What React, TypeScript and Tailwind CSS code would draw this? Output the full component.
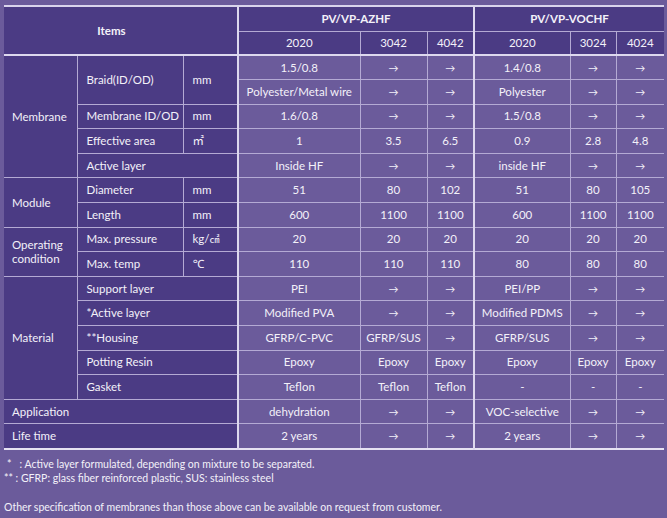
import React from "react";

const A = "→";

// six values per row: AZHF 2020 / 3042 / 4042, VOCHF 2020 / 3024 / 4024
const DATA: string[][] = [
  ["1.5/0.8", A, A, "1.4/0.8", A, A],
  ["Polyester/Metal wire", A, A, "Polyester", A, A],
  ["1.6/0.8", A, A, "1.5/0.8", A, A],
  ["1", "3.5", "6.5", "0.9", "2.8", "4.8"],
  ["Inside HF", A, A, "inside HF", A, A],
  ["51", "80", "102", "51", "80", "105"],
  ["600", "1100", "1100", "600", "1100", "1100"],
  ["20", "20", "20", "20", "20", "20"],
  ["110", "110", "110", "80", "80", "80"],
  ["PEI", A, A, "PEI/PP", A, A],
  ["Modified PVA", A, A, "Modified PDMS", A, A],
  ["GFRP/C-PVC", "GFRP/SUS", A, "GFRP/SUS", A, A],
  ["Epoxy", "Epoxy", "Epoxy", "Epoxy", "Epoxy", "Epoxy"],
  ["Teflon", "Teflon", "Teflon", "-", "-", "-"],
  ["dehydration", A, A, "VOC-selective", A, A],
  ["2 years", A, A, "2 years", A, A],
];

const dark = "bg-[#4b3b84] border border-[#b4aad4] text-left align-middle whitespace-nowrap p-0";
const cat = `${dark} border-l-0 pl-[8px]`;
const label = `${dark} pl-[9px]`;

const DataCells = ({ vals }: { vals: string[] }) => (
  <>
    {vals.map((v, i) => (
      <td
        key={i}
        className={
          "border border-[#b4aad4] text-center align-middle whitespace-nowrap p-0 " +
          (i === 0 || i === 3 ? "border-l-2 border-l-[#ddd8ee] " : "") +
          (i === 5 ? "border-r-0 " : "") +
          (v === A ? "text-[10px]" : "")
        }
      >
        {v}
      </td>
    ))}
  </>
);

export default function App() {
  const left: React.ReactNode[] = [
    <>
      <td rowSpan={5} className={cat}>Membrane</td>
      <td rowSpan={2} className={label}>Braid(ID/OD)</td>
      <td rowSpan={2} className={label}>mm</td>
    </>,
    null,
    <>
      <td className={label}>Membrane ID/OD</td>
      <td className={label}>mm</td>
    </>,
    <>
      <td className={label}>Effective area</td>
      <td className={label}>㎡</td>
    </>,
    <td colSpan={2} className={label}>Active layer</td>,
    <>
      <td rowSpan={2} className={cat}>Module</td>
      <td className={label}>Diameter</td>
      <td className={label}>mm</td>
    </>,
    <>
      <td className={label}>Length</td>
      <td className={label}>mm</td>
    </>,
    <>
      <td rowSpan={2} className={`${cat} leading-[14px]`}>
        Operating
        <br />
        condition
      </td>
      <td className={label}>Max. pressure</td>
      <td className={label}>
        kg/<span className="text-[10px]">㎠</span>
      </td>
    </>,
    <>
      <td className={label}>Max. temp</td>
      <td className={label}>℃</td>
    </>,
    <>
      <td rowSpan={5} className={cat}>Material</td>
      <td colSpan={2} className={label}>Support layer</td>
    </>,
    <td colSpan={2} className={label}>*Active layer</td>,
    <td colSpan={2} className={label}>**Housing</td>,
    <td colSpan={2} className={label}>Potting Resin</td>,
    <td colSpan={2} className={label}>Gasket</td>,
    <td colSpan={3} className={cat}>Application</td>,
    <td colSpan={3} className={cat}>Life time</td>,
  ];

  return (
    <div
      className="w-[667px] h-[518px] bg-[#6b5b9b] text-[#f3f1f9] pl-[4px] pt-[5px] overflow-hidden"
      style={{ fontFamily: "Lato, 'Noto Sans', 'Noto Sans CJK KR', sans-serif" }}
    >
      <table className="table-fixed border-collapse w-[660px] text-[11.5px] leading-[14px]">
        <colgroup>
          <col className="w-[73px]" />
          <col className="w-[106px]" />
          <col className="w-[55px]" />
          <col className="w-[122px]" />
          <col className="w-[67px]" />
          <col className="w-[47px]" />
          <col className="w-[96px]" />
          <col className="w-[46px]" />
          <col className="w-[48px]" />
        </colgroup>
        <thead>
          <tr className="h-[25px]">
            <th
              colSpan={3}
              rowSpan={2}
              className="bg-[#4b3b84] border border-[#b4aad4] border-t-2 border-t-[#d9d4ec] border-l-0 border-b-2 border-b-[#ddd8ee] pr-[18px] font-bold p-0"
            >
              Items
            </th>
            <th
              colSpan={3}
              className="bg-[#4b3b84] border border-[#b4aad4] border-t-2 border-t-[#d9d4ec] border-l-2 border-l-[#ddd8ee] font-bold p-0"
            >
              PV/VP-AZHF
            </th>
            <th
              colSpan={3}
              className="bg-[#4b3b84] border border-[#b4aad4] border-t-2 border-t-[#d9d4ec] border-l-2 border-l-[#ddd8ee] border-r-0 font-bold p-0"
            >
              PV/VP-VOCHF
            </th>
          </tr>
          <tr className="h-[24px]">
            {["2020", "3042", "4042", "2020", "3024", "4024"].map((v, i) => (
              <th
                key={i}
                className={
                  "bg-[#4b3b84] border border-[#b4aad4] border-b-2 border-b-[#ddd8ee] font-normal p-0 " +
                  (i === 0 || i === 3 ? "border-l-2 border-l-[#ddd8ee] " : "") +
                  (i === 5 ? "border-r-0" : "")
                }
              >
                {v}
              </th>
            ))}
          </tr>
        </thead>
        <tbody>
          {DATA.map((vals, r) => (
            <tr key={r} className={r === 15 ? "h-[24.6px] border-b-2 border-b-[#e6e2f2]" : "h-[24.6px]"}>
              {left[r]}
              <DataCells vals={vals} />
            </tr>
          ))}
        </tbody>
      </table>
      <div className="mt-[7px] text-[10.5px] leading-[14px] whitespace-pre">
        <p className="pl-[3px]">{"*   : Active layer formulated, depending on mixture to be separated."}</p>
        <p>{"** : GFRP: glass fiber reinforced plastic, SUS: stainless steel"}</p>
        <p className="mt-[15px]">
          Other specification of membranes than those above can be available on request from customer.
        </p>
      </div>
    </div>
  );
}
